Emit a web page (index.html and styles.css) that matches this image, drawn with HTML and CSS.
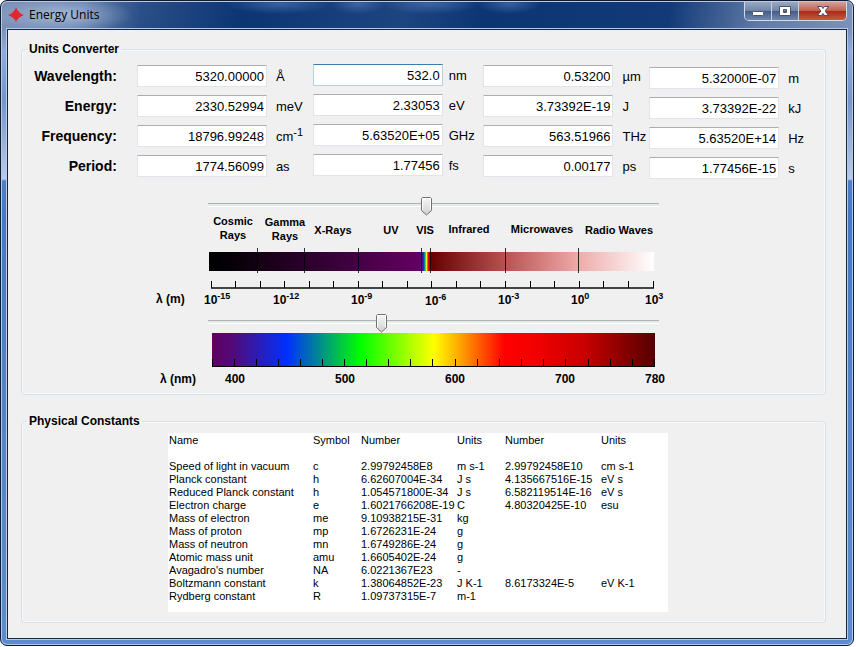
FILE: index.html
```html
<!DOCTYPE html>
<html lang="en">
<head>
<meta charset="utf-8">
<title>Energy Units</title>
<link rel="stylesheet" href="styles.css">
</head>
<body>
<div class="window">
  <header class="titlebar">
    <svg class="app-icon" width="16" height="16" viewBox="0 0 16 16" aria-hidden="true"><path fill="#e3262e" d="M8 0 Q9 4 11.500 5.500 Q13 7 16 8 Q13 9 11.500 10.500 Q9 12 8 15.500 Q7 12 4.500 10.500 Q3 9 0 8 Q3 7 4.500 5.500 Q7 4 8 0Z"/></svg>
    <h1 class="title">Energy Units</h1>
    <div class="caption">
      <button class="cap" type="button" aria-label="Minimize"><svg width="14" height="14" viewBox="0 0 14 14"><rect x="1.500" y="7.500" width="11" height="4" rx="1" fill="#fff" stroke="#4b5568"/></svg></button>
      <button class="cap" type="button" aria-label="Maximize"><svg width="14" height="14" viewBox="0 0 14 14"><path d="M1.500 2.500h11v9h-11zM5.500 5.500v3h3v-3z" fill="#fff" stroke="#4b5568" fill-rule="evenodd"/></svg></button>
      <button class="cap close" type="button" aria-label="Close"><svg width="14" height="14" viewBox="0 0 14 14"><path d="M1.500 2.500h4L7 4.500 8.500 2.500h4L9.200 7l3.300 4.500h-4L7 9.500 5.500 11.500h-4L4.800 7z" fill="#fff" stroke="#5a4450"/></svg></button>
    </div>
  </header>
  <main class="client">
    <fieldset class="group">
      <legend>Units Converter</legend>
      <div class="converter">
        <div class="names">
          <span id="wl">Wavelength:</span><span id="en">Energy:</span><span id="fr">Frequency:</span><span id="pe">Period:</span>
        </div>
        <div class="col">
          <input id="a1" aria-labelledby="wl" value="5320.00000"><label for="a1">Å</label>
          <input id="a2" aria-labelledby="en" value="2330.52994"><label for="a2">meV</label>
          <input id="a3" aria-labelledby="fr" value="18796.99248"><label for="a3">cm<sup>-1</sup></label>
          <input id="a4" aria-labelledby="pe" value="1774.56099"><label for="a4">as</label>
        </div>
        <div class="col second">
          <input class="active" id="b1" aria-labelledby="wl" value="532.0"><label for="b1">nm</label>
          <input id="b2" aria-labelledby="en" value="2.33053"><label for="b2">eV</label>
          <input id="b3" aria-labelledby="fr" value="5.63520E+05"><label for="b3">GHz</label>
          <input id="b4" aria-labelledby="pe" value="1.77456"><label for="b4">fs</label>
        </div>
        <div class="col third">
          <input id="c1" aria-labelledby="wl" value="0.53200"><label for="c1">µm</label>
          <input id="c2" aria-labelledby="en" value="3.73392E-19"><label for="c2">J</label>
          <input id="c3" aria-labelledby="fr" value="563.51966"><label for="c3">THz</label>
          <input id="c4" aria-labelledby="pe" value="0.00177"><label for="c4">ps</label>
        </div>
        <div class="col fourth">
          <input id="d1" aria-labelledby="wl" value="5.32000E-07"><label for="d1">m</label>
          <input id="d2" aria-labelledby="en" value="3.73392E-22"><label for="d2">kJ</label>
          <input id="d3" aria-labelledby="fr" value="5.63520E+14"><label for="d3">Hz</label>
          <input id="d4" aria-labelledby="pe" value="1.77456E-15"><label for="d4">s</label>
        </div>
      </div>

      <div class="spectra">
        <input class="slider" type="range" min="0" max="440" value="213" aria-label="Wavelength in metres">
        <svg class="chart" width="520" height="98" viewBox="150 216 520 98" role="img" aria-label="Electromagnetic spectrum">
          <defs>
            <linearGradient id="uv"><stop offset="0" stop-color="#000"/><stop offset=".1" stop-color="#060006"/><stop offset="1" stop-color="#640064"/></linearGradient>
            <linearGradient id="vis"><stop offset="0" stop-color="#5a0070"/><stop offset=".25" stop-color="#0040ff"/><stop offset=".4" stop-color="#00e020"/><stop offset=".58" stop-color="#ff0"/><stop offset=".75" stop-color="#f00"/><stop offset="1" stop-color="#900"/></linearGradient>
            <linearGradient id="ir"><stop offset="0" stop-color="#600"/><stop offset=".33" stop-color="#b85050"/><stop offset=".66" stop-color="#eeaaaa"/><stop offset="1" stop-color="#fff"/></linearGradient>
          </defs>
          <g class="band-label">
            <text x="233" y="225">Cosmic</text><text x="233" y="239">Rays</text>
            <text x="285" y="226">Gamma</text><text x="285" y="240">Rays</text>
            <text x="333" y="234">X-Rays</text><text x="391" y="234">UV</text><text x="425" y="234">VIS</text>
            <text x="469" y="233">Infrared</text><text x="542" y="233">Microwaves</text><text x="619" y="234">Radio Waves</text>
          </g>
          <rect x="209" y="252" width="213" height="19" fill="url(#uv)"/>
          <rect x="422" y="252" width="8" height="19" fill="url(#vis)"/>
          <rect x="430" y="252" width="224" height="19" fill="url(#ir)"/>
          <path class="divider" d="M257.500 248v25M304.500 248v25M358.500 248v25M421.500 248v25M430.500 248v25M505.500 248v25M578.500 248v25"/>
          <path class="axis" d="M211 288H654"/>
          <path class="ticks" d="M211.500 281v7M235.500 281v7M260.500 281v7M284.500 281v7M309.500 281v7M333.500 281v7M358.500 281v7M382.500 281v7M407.500 281v7M431.500 281v7M456.500 281v7M480.500 281v7M505.500 281v7M530.500 281v7M554.500 281v7M579.500 281v7M603.500 281v7M628.500 281v7M653.500 281v7"/>
          <g class="scale">
            <text x="156" y="303">λ (m)</text>
            <text x="204" y="304">10<tspan class="exp" dy="-5">-15</tspan></text>
            <text x="273" y="304">10<tspan class="exp" dy="-5">-12</tspan></text>
            <text x="351" y="304">10<tspan class="exp" dy="-5">-9</tspan></text>
            <text x="425" y="305">10<tspan class="exp" dy="-5">-6</tspan></text>
            <text x="498" y="304">10<tspan class="exp" dy="-5">-3</tspan></text>
            <text x="571" y="304">10<tspan class="exp" dy="-5">0</tspan></text>
            <text x="645" y="304">10<tspan class="exp" dy="-5">3</tspan></text>
          </g>
        </svg>
        <input class="slider" type="range" min="0" max="440" value="168" aria-label="Wavelength in nanometres">
        <svg class="chart" width="520" height="55" viewBox="150 333 520 55" role="img" aria-label="Visible spectrum">
          <defs>
            <linearGradient id="rainbow" gradientUnits="userSpaceOnUse" x1="212" x2="655" y1="0" y2="0"><stop offset="0" stop-color="#600060"/><stop offset=".05" stop-color="#500b7c"/><stop offset=".17" stop-color="#0030ff"/><stop offset=".335" stop-color="#0f0"/><stop offset=".5" stop-color="#ff0"/><stop offset=".55" stop-color="#ffb400"/><stop offset=".66" stop-color="#f00"/><stop offset=".74" stop-color="#f00000"/><stop offset=".84" stop-color="#c80000"/><stop offset="1" stop-color="#500"/></linearGradient>
          </defs>
          <rect x="212" y="333" width="443" height="34" fill="url(#rainbow)"/>
          <path class="ticks" d="M212 366.500H655M212.500 359v7M234.500 359v7M256.500 359v7M278.500 359v7M300.500 359v7M322.500 359v7M344.500 359v7M366.500 359v7M388.500 359v7M410.500 359v7M432.500 359v7M455.500 359v7M477.500 359v7M499.500 359v7M521.500 359v7M543.500 359v7M565.500 359v7M588.500 359v7M610.500 359v7M632.500 359v7M654.500 359v7"/>
          <g class="scale">
            <text x="160" y="383">λ (nm)</text>
            <text x="225" y="383">400</text><text x="335" y="383">500</text><text x="445" y="383">600</text><text x="555" y="383">700</text><text x="645" y="383">780</text>
          </g>
        </svg>
      </div>
    </fieldset>

    <fieldset class="group">
      <legend>Physical Constants</legend>
      <div class="sheet">
        <table>
          <colgroup><col class="c-name"><col class="c-short"><col class="c-num"><col class="c-short"><col class="c-num"><col></colgroup>
          <thead><tr><th>Name</th><th>Symbol</th><th>Number</th><th>Units</th><th>Number</th><th>Units</th></tr></thead>
          <tbody>
            <tr><td>Speed of light in vacuum</td><td>c</td><td>2.99792458E8</td><td>m s-1</td><td>2.99792458E10</td><td>cm s-1</td></tr>
            <tr><td>Planck constant</td><td>h</td><td>6.62607004E-34</td><td>J s</td><td>4.135667516E-15</td><td>eV s</td></tr>
            <tr><td>Reduced Planck constant</td><td>h</td><td>1.054571800E-34</td><td>J s</td><td>6.582119514E-16</td><td>eV s</td></tr>
            <tr><td>Electron charge</td><td>e</td><td>1.6021766208E-19</td><td>C</td><td>4.80320425E-10</td><td>esu</td></tr>
            <tr><td>Mass of electron</td><td>me</td><td>9.10938215E-31</td><td>kg</td><td></td><td></td></tr>
            <tr><td>Mass of proton</td><td>mp</td><td>1.6726231E-24</td><td>g</td><td></td><td></td></tr>
            <tr><td>Mass of neutron</td><td>mn</td><td>1.6749286E-24</td><td>g</td><td></td><td></td></tr>
            <tr><td>Atomic mass unit</td><td>amu</td><td>1.6605402E-24</td><td>g</td><td></td><td></td></tr>
            <tr><td>Avagadro's number</td><td>NA</td><td>6.0221367E23</td><td>-</td><td></td><td></td></tr>
            <tr><td>Boltzmann constant</td><td>k</td><td>1.38064852E-23</td><td>J K-1</td><td>8.6173324E-5</td><td>eV K-1</td></tr>
            <tr><td>Rydberg constant</td><td>R</td><td>1.09737315E-7</td><td>m-1</td><td></td><td></td></tr>
          </tbody>
        </table>
      </div>
    </fieldset>
  </main>
</div>
</body>
</html>
```
FILE: styles.css
```css
* { box-sizing: border-box; }

body {
  display: flex;
  flex-direction: column;
  min-height: 100vh;
  margin: 0;
  padding: 0 2px 2px 0;
  background: #fff;
  color: #000;
  font: 11px/13px "Liberation Sans", Arial, sans-serif;
}

.window {
  display: flex;
  flex: 1;
  flex-direction: column;
  padding: 1px 7px 7px;
  border: 1px solid #111b2e;
  border-radius: 7px;
  background:
    radial-gradient(ellipse 70px 18px at 62px 14px, rgba(190, 205, 228, 0.7), transparent),
    radial-gradient(ellipse 54px 10px at 278px 3px, rgba(84, 124, 190, 0.6), transparent),
    radial-gradient(ellipse 28px 10px at 357px 3px, rgba(84, 124, 190, 0.6), transparent),
    radial-gradient(ellipse 50px 10px at 430px 3px, rgba(84, 124, 190, 0.6), transparent),
    radial-gradient(ellipse 32px 10px at 508px 3px, rgba(84, 124, 190, 0.6), transparent),
    linear-gradient(100deg, #7d92b8 0, #6480ae 80px, #2a4f88 140px, #0b3573 240px, #1d4580 400px, #0b3573 480px, #123a78 660px, #5f7aa6 750px, #7d92b8 100%) 0 0 / 100% 29px no-repeat,
    linear-gradient(#7d92b8 29px, #8fabdf 50px, #7695cb 100px, #b8cbea 178px, #4f7fc8 180px, #4679c4 214px, #5384c9 400px, #5a8ccf 100%);
  box-shadow: inset 0 0 0 1px #b6c9e6;
}

.titlebar {
  display: flex;
  height: 28px;
  gap: 5px;
  margin-right: -1px;
}
.app-icon { margin-top: 5px; }
.title {
  margin: 4px 0 0;
  font: 12px/18px "Open Sans", "Noto Sans", sans-serif;
}

.caption {
  display: flex;
  height: 19px;
  margin-left: auto;
  border: 1px solid #d0dae9;
  border-top: 0;
  border-radius: 0 0 5px 5px;
  overflow: hidden;
}
.cap {
  display: flex;
  align-items: center;
  justify-content: center;
  width: 27px;
  padding: 0;
  border: 0;
  border-right: 1px solid #c5d0e0;
  background: linear-gradient(#9aa9c2, #7085a7 48%, #415c88 50%, #6f87ab);
}
.cap.close {
  width: 47px;
  border-right: 0;
  background: linear-gradient(#d8a095, #c4604f 48%, #a52a18 50%, #c85a40);
}

.client {
  display: flex;
  flex: 1;
  flex-direction: column;
  gap: 19px;
  padding: 12px 20px 15px 13px;
  background: #f0f0f0;
  outline: 1px solid #16263f;
  box-shadow: 0 0 0 2px #b6c9e6;
}

.group {
  min-width: 0;
  margin: 0;
  padding: 0 0 6px;
  border: 1px solid #d5dfe5;
  border-radius: 4px;
  box-shadow: inset 0 0 0 1px #f9fafb;
}
.group legend {
  margin-left: 5px;
  padding: 0 2px;
  font-size: 12px;
  line-height: 14px;
  font-weight: bold;
}

.converter {
  display: flex;
  height: 141px;
  padding-top: 8px;
}
.names, .col {
  display: grid;
  grid-auto-rows: 22px;
  row-gap: 8px;
  align-content: start;
  align-items: center;
}
.names {
  width: 115px;
  padding-top: 1px;
  padding-right: 20px;
  font-size: 14px;
  font-weight: bold;
  text-align: right;
}
.col {
  grid-template-columns: 130px 1fr;
  column-gap: 9px;
  width: 176px;
  padding-top: 1px;
  font-size: 13px;
}
.second { width: 171px; column-gap: 6px; padding-top: 0; }
.third { width: 166px; }
.fourth { padding-top: 3px; }
.col input {
  width: 100%;
  height: 22px;
  padding: 0 2px;
  border: 1px solid #e2e3ea;
  border-top-color: #abadb3;
  border-radius: 1px;
  outline: 0;
  background: #fff;
  color: #000;
  font: inherit;
  text-align: right;
}
.col .active {
  border-color: #b5cfe7;
  border-top-color: #3d7bad;
}
.col label { padding-top: 1px; white-space: nowrap; }
sup { font-size: 11px; line-height: 0; }

.spectra {
  display: flex;
  flex-direction: column;
  width: 520px;
  margin-left: 128px;
}
.chart { display: block; font-weight: bold; }
.band-label { font-size: 11px; text-anchor: middle; }
.scale { font-size: 12px; }
.exp { font-size: 9px; }
.divider { stroke: #000; stroke-opacity: 0.8; }
.axis { stroke: #444; stroke-width: 2; }
.ticks { stroke: #000; fill: none; }

.slider {
  appearance: none;
  width: 451px;
  height: 19px;
  margin: 0 0 0 58px;
  background: linear-gradient(#b0b2b2 1px, #e5eaea 1px, #e5eaea 3px, #fff 3px) 0 6px / 100% 4px no-repeat;
}
.slider::-webkit-slider-thumb {
  appearance: none;
  width: 11px;
  height: 19px;
  background: url("data:image/svg+xml,%3Csvg xmlns='http://www.w3.org/2000/svg' width='11' height='19'%3E%3Cdefs%3E%3ClinearGradient id='g' x2='0' y2='1'%3E%3Cstop stop-color='%23f6f6f6'/%3E%3Cstop offset='.5' stop-color='%23e4e4e4'/%3E%3Cstop offset='1' stop-color='%23d0d0d0'/%3E%3C/linearGradient%3E%3C/defs%3E%3Cpath d='M1.500 .5h8l1 1v12l-5 4.500-5-4.500v-12z' fill='url(%23g)' stroke='%23707070'/%3E%3Cpath d='M1.500 13V1.500h8V13' fill='none' stroke='%23fff'/%3E%3C/svg%3E") no-repeat;
}

.sheet {
  width: 500px;
  margin: 5px 0 4px 146px;
  padding: 1px 0 9px 1px;
  background: #fff;
}
table { width: 100%; table-layout: fixed; border-collapse: collapse; }
.c-name { width: 144px; }
.c-short { width: 48px; }
.c-num { width: 96px; }
th, td {
  height: 13px;
  padding: 0;
  font-weight: normal;
  text-align: left;
  white-space: nowrap;
}
th { padding-bottom: 13px; }
```
